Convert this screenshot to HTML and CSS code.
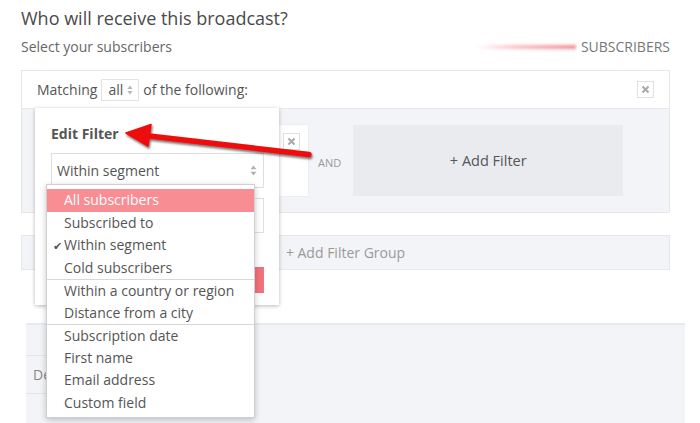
FILE: index.html
```html
<!DOCTYPE html>
<html>
<head>
<meta charset="utf-8">
<link rel="stylesheet" href="styles.css">
</head>
<body>
<div class="page">
  <h1 class="title">Who will receive this broadcast?</h1>
  <div class="subrow">
    <span>Select your subscribers</span>
    <span class="count"><span class="smear"></span>SUBSCRIBERS</span>
  </div>
  <div class="group">
    <div class="group-head">
      <span>Matching</span>
      <span class="sel">all <svg class="updown" width="6" height="10" viewBox="0 0 6 10"><path d="M3 0.5 L5.6 4 H0.4 Z M3 9.5 L5.6 6 H0.4 Z" fill="#b5b5b5"/></svg></span>
      <span>of the following:</span>
      <span class="spacer"></span>
      <span class="xbtn"><svg width="9" height="9" viewBox="0 0 9 9"><path d="M1.5 1.5 L7.5 7.5 M7.5 1.5 L1.5 7.5" stroke="#a9a9a9" stroke-width="2"/></svg></span>
    </div>
    <div class="group-body">
      <div class="card filter-card">
        <span class="xbtn"><svg width="9" height="9" viewBox="0 0 9 9"><path d="M1.5 1.5 L7.5 7.5 M7.5 1.5 L1.5 7.5" stroke="#a9a9a9" stroke-width="2"/></svg></span>
      </div>
      <span class="and">AND</span>
      <div class="card add-filter">+ Add Filter</div>
    </div>
  </div>
  <div class="add-group">+ Add Filter Group</div>
  <div class="lower">
    <div class="lower-row">De</div>
  </div>
</div>

<div class="popup">
  <div class="popup-title">Edit Filter</div>
  <div class="field select-field">
    <span>Within segment</span>
    <svg class="updown" width="7" height="11" viewBox="0 0 7 11"><path d="M3.5 0.5 L6.5 4.3 H0.5 Z M3.5 10.5 L6.5 6.7 H0.5 Z" fill="#b0b0b0"/></svg>
  </div>
  <div class="field"></div>
  <div class="btn"></div>
</div>

<ul class="dropdown">
  <li class="item active">All subscribers</li>
  <li class="item">Subscribed to</li>
  <li class="item"><span class="check">✔</span>Within segment</li>
  <li class="item">Cold subscribers</li>
  <li class="item sep">Within a country or region</li>
  <li class="item">Distance from a city</li>
  <li class="item sep">Subscription date</li>
  <li class="item">First name</li>
  <li class="item">Email address</li>
  <li class="item">Custom field</li>
</ul>

<svg class="arrow" width="700" height="423" viewBox="0 0 700 423">
  <defs>
    <filter id="sh" x="-10%" y="-50%" width="120%" height="200%">
      <feDropShadow dx="1" dy="2" stdDeviation="1.2" flood-color="#000" flood-opacity="0.55"/>
    </filter>
  </defs>
  <g filter="url(#sh)">
    <path d="M145 135.5 L309 154.5" stroke="#ee0a0a" stroke-width="5.5" stroke-linecap="round"/>
    <path d="M126 133 L151 124.5 L148 146 Z" fill="#ee0a0a" stroke="#ee0a0a" stroke-width="1.5" stroke-linejoin="round"/>
  </g>
</svg>
</body>
</html>
```

FILE: styles.css
```css
* { box-sizing: border-box; }
html, body { margin: 0; padding: 0; background: #fff; }
body {
  font-family: "Open Sans", "Noto Sans", sans-serif;
  color: #555;
  width: 700px;
  height: 423px;
  overflow: hidden;
  position: relative;
}
.page {
  padding: 6px 30px 0 21px;
}
.title {
  margin: 0;
  font-size: 18px;
  line-height: 24px;
  font-weight: 400;
  color: #4a4a4a;
}
.subrow {
  margin-top: 8px;
  display: flex;
  justify-content: space-between;
  align-items: center;
  font-size: 14px;
  line-height: 18px;
  color: #666;
}
.count {
  display: flex;
  align-items: center;
  color: #777;
}
.smear {
  display: inline-block;
  width: 100px;
  height: 4px;
  margin-right: 5px;
  background: linear-gradient(to right, rgba(255,255,255,0), rgba(245,120,130,0.45) 40%, rgba(240,90,100,0.7));
  filter: blur(1.4px);
}
.group {
  margin-top: 14px;
  border: 1px solid #e6e6e6;
}
.group-head {
  height: 37px;
  display: flex;
  align-items: center;
  padding: 0 15px;
  font-size: 14px;
  color: #555;
}
.sel {
  display: inline-flex;
  align-items: center;
  height: 22px;
  margin: 0 4px 0 4px;
  padding: 0 5px 0 6px;
  border: 1px solid #e2e2e2;
  color: #555;
}
.sel .updown { margin-left: 4px; }
.spacer { flex: 1; }
.xbtn {
  display: inline-flex;
  align-items: center;
  justify-content: center;
  width: 17px;
  height: 17px;
  border: 1px solid #e0e0e0;
  background: #fff;
}
.group-body {
  background: #f3f4f7;
  border-top: 1px solid #e6e8ec;
  padding: 16px 15px;
  display: flex;
  align-items: center;
}
.card {
  height: 71px;
  width: 271px;
}
.filter-card {
  background: #fff;
  box-shadow: 0 0 2px rgba(0,0,0,0.08);
  display: flex;
  justify-content: flex-end;
  align-items: flex-start;
  padding: 8px 8px;
}
.and {
  font-size: 11px;
  color: #9a9a9a;
  margin: 3px 12px 0 10px;
}
.add-filter {
  width: 270px;
  background: #e9ebef;
  display: flex;
  align-items: center;
  justify-content: center;
  font-size: 14.5px;
  color: #555;
}
.add-group {
  margin-top: 22px;
  height: 35px;
  background: #f3f4f7;
  border: 1px solid #e6e8ec;
  display: flex;
  align-items: center;
  justify-content: center;
  font-size: 14px;
  color: #9a9a9a;
}
.lower {
  margin: 53px -15px 0 5px;
  height: 110px;
  background: #f3f4f7;
  border-top: 2px solid #e8eaee;
  padding-top: 30px;
}
.lower-row {
  width: 220px;
  height: 39px;
  border-top: 1px solid #e3e5ea;
  border-bottom: 1px solid #e3e5ea;
  display: flex;
  align-items: center;
  padding-left: 7px;
  font-size: 14px;
  color: #888;
}

.popup {
  position: absolute;
  left: 35px;
  top: 108px;
  width: 244px;
  height: 197px;
  background: #fff;
  box-shadow: 0 1px 4px rgba(0,0,0,0.28);
  padding: 16px 15px 0 16px;
}
.popup-title {
  font-size: 14px;
  font-weight: 700;
  line-height: 20px;
  color: #555;
}
.field {
  height: 35px;
  border: 1px solid #dedede;
  margin-top: 10px;
}
.select-field {
  margin-top: 9px;
  display: flex;
  align-items: center;
  justify-content: space-between;
  padding: 0 6px 0 5px;
  font-size: 14px;
  color: #555;
}
.btn {
  margin-top: 34px;
  height: 26px;
  background: #f4707a;
}

.dropdown {
  position: absolute;
  left: 46px;
  top: 184px;
  width: 209px;
  height: 234px;
  margin: 0;
  padding: 4px 0 0 0;
  list-style: none;
  background: #fff;
  border: 1px solid #cfcfcf;
  box-shadow: 0 2px 6px rgba(0,0,0,0.22);
}
.item {
  height: 22.5px;
  line-height: 22px;
  padding-left: 17px;
  font-size: 14px;
  color: #555;
  white-space: nowrap;
}
.item.active {
  background: #f98d94;
  color: #fff;
}
.item.sep {
  border-top: 1px solid #d8d8d8;
  line-height: 21px;
}
.check {
  display: inline-block;
  width: 10px;
  margin-left: -11px;
  margin-right: 1px;
  font-size: 11px;
  font-family: "DejaVu Sans", sans-serif;
  color: #555;
}
.arrow {
  position: absolute;
  left: 0;
  top: 0;
  pointer-events: none;
}
```
